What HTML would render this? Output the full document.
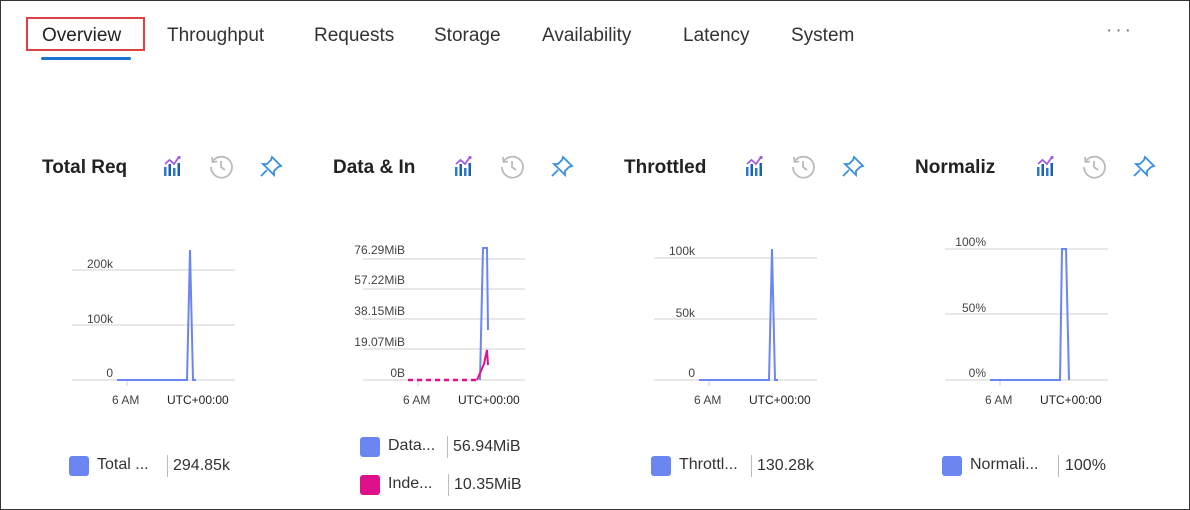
<!DOCTYPE html><html><head><style>
body{margin:0;width:1190px;height:510px;overflow:hidden;background:#fff;font-family:"Liberation Sans",sans-serif;}
.frame{position:absolute;left:0;top:0;width:1188px;height:508px;border:1px solid #333;}
.t{position:absolute;font-size:19px;color:#333;top:25px;}
.title{position:absolute;top:157px;font-size:19px;font-weight:bold;color:#222;}
.lab{position:absolute;font-size:12px;color:#444;text-align:right;}
.lg{position:absolute;font-size:16px;color:#333;}
.sq{position:absolute;width:20px;height:20px;border-radius:3px;}
.sep{position:absolute;width:1px;height:22px;background:#bbb;}
svg{position:absolute;left:0;top:0}
</style></head><body>
<div class="frame"></div>
<div style="position:absolute;left:26px;top:17px;width:119px;height:34px;border:2px solid #e04040;box-sizing:border-box"></div>
<div style="position:absolute;left:41px;top:57px;width:90px;height:3px;background:#1a73d0;border-radius:2px"></div>
<div class="t" style="left:42px;color:#222">Overview</div>
<div class="t" style="left:167px">Throughput</div>
<div class="t" style="left:314px">Requests</div>
<div class="t" style="left:434px">Storage</div>
<div class="t" style="left:542px">Availability</div>
<div class="t" style="left:683px">Latency</div>
<div class="t" style="left:791px">System</div>
<div class="t" style="left:1106px;top:20px;color:#777;letter-spacing:3px">···</div>

<div class="title" style="left:42px">Total Req</div>
<div class="title" style="left:333px">Data &amp; In</div>
<div class="title" style="left:624px">Throttled</div>
<div class="title" style="left:915px">Normaliz</div>

<svg width="1190" height="510">
<defs>
<g id="ic">
<rect x="0" y="10" width="2.5" height="9" fill="#2a7ad0"/><rect x="4.5" y="7" width="2.5" height="12" fill="#1f5fb0"/><rect x="9" y="11" width="2.5" height="8" fill="#2a7ad0"/><rect x="13.5" y="6" width="2.5" height="13" fill="#1f5fb0"/>
<polyline points="1,7 5.5,3 10,7 15,0" fill="none" stroke="#a35ce0" stroke-width="1.8"/>
<circle cx="15" cy="0.5" r="1.6" fill="#a35ce0"/>
<g transform="translate(47,0)" fill="none" stroke="#bbb" stroke-width="1.8"><path d="M2,4 A10.5,10.5 0 1 1 0,10"/><path d="M1,0 L1.5,5 L6,4.5"/><path d="M10,4 L10,10 L14,13"/></g>
<g transform="translate(96,-1)" fill="none" stroke="#3a8ee0" stroke-width="1.8"><path d="M12,1 L21,10 L18,11 L14,15 L14,19 L3,8 L7,8 L11,4 Z"/><path d="M7,14 L1,20"/></g>
</g>
</defs>
<use href="#ic" x="164" y="157"/><use href="#ic" x="455" y="157"/><use href="#ic" x="746" y="157"/><use href="#ic" x="1037" y="157"/>
<g stroke="#d0d0d0" stroke-width="1">
<line x1="72" y1="270" x2="235" y2="270"/><line x1="72" y1="325" x2="235" y2="325"/><line x1="72" y1="380" x2="235" y2="380"/>
<line x1="363" y1="259" x2="525" y2="259"/><line x1="363" y1="289" x2="525" y2="289"/><line x1="363" y1="319" x2="525" y2="319"/><line x1="363" y1="349" x2="525" y2="349"/><line x1="363" y1="380" x2="525" y2="380"/>
<line x1="654" y1="258" x2="817" y2="258"/><line x1="654" y1="319" x2="817" y2="319"/><line x1="654" y1="380" x2="817" y2="380"/>
<line x1="945" y1="249" x2="1108" y2="249"/><line x1="945" y1="314" x2="1108" y2="314"/><line x1="945" y1="380" x2="1108" y2="380"/>
<line x1="127" y1="380" x2="127" y2="386"/><line x1="418" y1="380" x2="418" y2="386"/><line x1="709" y1="380" x2="709" y2="386"/><line x1="1000" y1="380" x2="1000" y2="386"/>
</g>
<g fill="none" stroke="#6b86f0" stroke-width="2">
<polyline points="117,380 187,380 190,250 193,380 196,380"/>
<polyline points="480,380 483,248 487,248 488,330"/>
<polyline points="699,380 769,380 772,249 775,380 778,380"/>
<polyline points="990,380 1060,380 1062,249 1066,249 1069,380"/>
</g>
<polyline points="408,380 477,380" stroke="#e0108a" stroke-width="2.5" stroke-dasharray="5,4" fill="none"/>
<polyline points="477,380 484,364 487,350 488,365" stroke="#e0108a" stroke-width="2" fill="none"/>
</svg>

<div class="lab" style="left:40px;top:257px;width:73px">200k</div>
<div class="lab" style="left:40px;top:312px;width:73px">100k</div>
<div class="lab" style="left:40px;top:366px;width:73px">0</div>
<div class="lab" style="left:330px;top:243px;width:75px">76.29MiB</div>
<div class="lab" style="left:330px;top:273px;width:75px">57.22MiB</div>
<div class="lab" style="left:330px;top:304px;width:75px">38.15MiB</div>
<div class="lab" style="left:330px;top:335px;width:75px">19.07MiB</div>
<div class="lab" style="left:330px;top:366px;width:75px">0B</div>
<div class="lab" style="left:620px;top:244px;width:75px">100k</div>
<div class="lab" style="left:620px;top:306px;width:75px">50k</div>
<div class="lab" style="left:620px;top:366px;width:75px">0</div>
<div class="lab" style="left:910px;top:235px;width:76px">100%</div>
<div class="lab" style="left:910px;top:301px;width:76px">50%</div>
<div class="lab" style="left:910px;top:366px;width:76px">0%</div>
<div class="lab" style="left:112px;top:393px">6 AM</div><div class="lab" style="left:167px;top:393px;color:#222">UTC+00:00</div>
<div class="lab" style="left:403px;top:393px">6 AM</div><div class="lab" style="left:458px;top:393px;color:#222">UTC+00:00</div>
<div class="lab" style="left:694px;top:393px">6 AM</div><div class="lab" style="left:749px;top:393px;color:#222">UTC+00:00</div>
<div class="lab" style="left:985px;top:393px">6 AM</div><div class="lab" style="left:1040px;top:393px;color:#222">UTC+00:00</div>

<div class="sq" style="left:69px;top:456px;background:#6b86f0"></div><div class="lg" style="left:97px;top:456px">Total ...</div><div class="sep" style="left:167px;top:455px"></div><div class="lg" style="left:173px;top:457px">294.85k</div>
<div class="sq" style="left:360px;top:437px;background:#6b86f0"></div><div class="lg" style="left:388px;top:437px">Data...</div><div class="sep" style="left:447px;top:436px"></div><div class="lg" style="left:453px;top:438px">56.94MiB</div>
<div class="sq" style="left:360px;top:475px;background:#e0108a"></div><div class="lg" style="left:388px;top:475px">Inde...</div><div class="sep" style="left:448px;top:474px"></div><div class="lg" style="left:454px;top:476px">10.35MiB</div>
<div class="sq" style="left:651px;top:456px;background:#6b86f0"></div><div class="lg" style="left:679px;top:456px">Throttl...</div><div class="sep" style="left:751px;top:455px"></div><div class="lg" style="left:757px;top:457px">130.28k</div>
<div class="sq" style="left:942px;top:456px;background:#6b86f0"></div><div class="lg" style="left:970px;top:456px">Normali...</div><div class="sep" style="left:1058px;top:455px"></div><div class="lg" style="left:1065px;top:457px">100%</div>
</body></html>
